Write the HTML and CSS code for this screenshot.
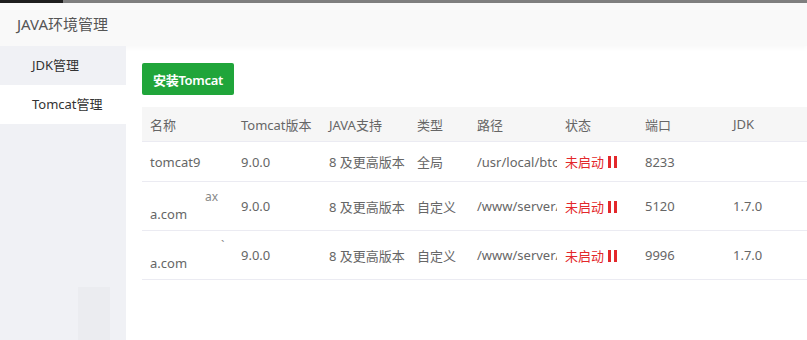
FILE: index.html
```html
<!DOCTYPE html>
<html>
<head>
    <meta charset="UTF-8">
    <title>JAVA环境管理</title>
    <link rel="stylesheet" href="styles.css">
</head>
<body>
    <div class="topbar"><span class="topbar-tab"></span></div>
    <div class="layer">
        <div class="layer-title">JAVA环境管理</div>
        <div class="layer-body">
            <ul class="side-menu">
                <li>JDK管理</li>
                <li class="active">Tomcat管理</li>
            </ul>
            <div class="side-mark"></div>

            <div class="main">
                <button type="button" class="btn-green">安装Tomcat</button>

                <table class="env-table">
                    <colgroup>
                        <col style="width: 91px">
                        <col style="width: 88px">
                        <col style="width: 88px">
                        <col style="width: 60px">
                        <col style="width: 88px">
                        <col style="width: 80px">
                        <col style="width: 88px">
                        <col style="width: 120px">
                    </colgroup>
                    <thead>
                        <tr>
                            <th>名称</th>
                            <th>Tomcat版本</th>
                            <th>JAVA支持</th>
                            <th>类型</th>
                            <th>路径</th>
                            <th>状态</th>
                            <th>端口</th>
                            <th>JDK</th>
                        </tr>
                    </thead>
                    <tbody>
                        <tr>
                            <td>tomcat9</td>
                            <td>9.0.0</td>
                            <td>8 及更高版本</td>
                            <td>全局</td>
                            <td class="path">/usr/local/btomcat/tomcat9</td>
                            <td class="status"><span class="stopped">未启动</span><span class="pause"><svg width="9" height="12" viewBox="0 0 9 12"><rect x="0" y="0" width="3" height="12" fill="#e3282b"/><rect x="6" y="0" width="3" height="12" fill="#e3282b"/></svg></span></td>
                            <td>8233</td>
                            <td></td>
                        </tr>
                        <tr>
                            <td class="name-wrap"><span class="name-top">ax</span><br>a.com</td>
                            <td>9.0.0</td>
                            <td>8 及更高版本</td>
                            <td>自定义</td>
                            <td class="path">/www/server/tomcat</td>
                            <td class="status"><span class="stopped">未启动</span><span class="pause"><svg width="9" height="12" viewBox="0 0 9 12"><rect x="0" y="0" width="3" height="12" fill="#e3282b"/><rect x="6" y="0" width="3" height="12" fill="#e3282b"/></svg></span></td>
                            <td>5120</td>
                            <td>1.7.0</td>
                        </tr>
                        <tr>
                            <td class="name-wrap"><span class="name-top tick">`</span><br>a.com</td>
                            <td>9.0.0</td>
                            <td>8 及更高版本</td>
                            <td>自定义</td>
                            <td class="path">/www/server/tomcat</td>
                            <td class="status"><span class="stopped">未启动</span><span class="pause"><svg width="9" height="12" viewBox="0 0 9 12"><rect x="0" y="0" width="3" height="12" fill="#e3282b"/><rect x="6" y="0" width="3" height="12" fill="#e3282b"/></svg></span></td>
                            <td>9996</td>
                            <td>1.7.0</td>
                        </tr>
                    </tbody>
                </table>
            </div>
        </div>
    </div>
</body>
</html>
```

FILE: styles.css
```css
body {
    margin: 0;
    width: 807px;
    height: 340px;
    overflow: hidden;
    background-color: #fff;
    font-family: "Noto Sans", "Noto Sans CJK SC", sans-serif;
    font-size: 13px;
    color: #666;
}
.topbar {
    height: 3px;
    background-color: #7f7f7f;
}
.topbar-tab {
    display: block;
    width: 63px;
    height: 3px;
    background-color: #1f1f1f;
}
.layer-title {
    height: 43px;
    line-height: 43px;
    padding-left: 17px;
    font-size: 15px;
    color: #555;
    background-color: #f9f9f9;
    box-shadow: 0 2px 5px rgba(0, 0, 0, 0.03);
    position: relative;
}
.layer-body {
    display: flex;
    height: 294px;
    position: relative;
}
.side-menu {
    width: 126px;
    margin: 0;
    padding: 0;
    list-style: none;
    background-color: #f0f1f5;
    flex-shrink: 0;
}
.side-menu li {
    height: 39px;
    line-height: 39px;
    padding-left: 32px;
    color: #333;
}
.side-menu li.active {
    background-color: #fff;
}
.side-mark {
    position: absolute;
    left: 78px;
    top: 241px;
    width: 32px;
    height: 53px;
    background-color: #ebecf0;
}
.main {
    padding: 17px 0 0 16px;
    flex: 1;
}
.btn-green {
    display: block;
    width: 92px;
    height: 32px;
    padding: 0;
    border: none;
    border-radius: 2px;
    background-color: #20a53a;
    color: #fff;
    font-family: inherit;
    font-size: 13px;
    font-weight: 600;
    letter-spacing: -0.3px;
}
.env-table {
    margin-top: 12px;
    width: 703px;
    table-layout: fixed;
    border-collapse: collapse;
}
.env-table th {
    height: 34px;
    padding: 0 8px;
    text-align: left;
    font-weight: normal;
    color: #666;
    background-color: #f6f6f6;
    border-bottom: 1px solid #ebebf2;
}
.env-table td {
    height: 39px;
    padding: 0 8px;
    white-space: nowrap;
    overflow: hidden;
    border-bottom: 1px solid #ebebf2;
}
.env-table td.path {
    padding-right: 2px;
    text-overflow: clip;
}
.env-table td.status {
    padding-right: 0;
}
.env-table td.name-wrap {
    height: 48px;
    line-height: 17px;
    white-space: normal;
}
.name-top {
    display: inline-block;
    padding-left: 55px;
    font-size: 12px;
    color: #888;
    vertical-align: top;
    margin-top: -1px;
}
.name-top.tick {
    padding-left: 71px;
}
.stopped {
    color: #e3282b;
}
.pause {
    margin-left: 4px;
}
.pause svg {
    vertical-align: -1px;
}
```
